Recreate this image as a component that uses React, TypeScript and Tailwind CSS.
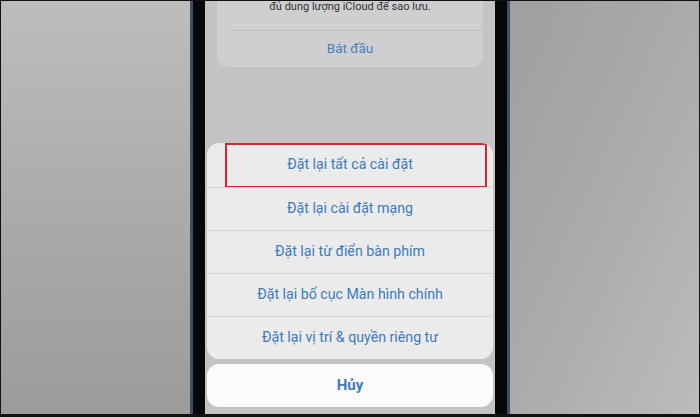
const rows = [
  "Đặt lại tất cả cài đặt",
  "Đặt lại cài đặt mạng",
  "Đặt lại từ điển bàn phím",
  "Đặt lại bố cục Màn hình chính",
  "Đặt lại vị trí & quyền riêng tư",
];

function Bezel() {
  return (
    <div className="flex h-full shrink-0">
      <div className="h-full w-[3px] bg-[#3d5063]" />
      <div className="h-full w-[12px] bg-[#070808]" />
    </div>
  );
}

export default function App() {
  return (
    <div
      className="flex h-[417px] w-[700px] overflow-hidden border border-b-[3px] border-[#111] bg-[#aaa]"
      style={{ fontFamily: 'Roboto, "Noto Sans", sans-serif' }}
    >
      <div className="h-full w-[189px] shrink-0 bg-gradient-to-b from-[#bdbdbd] via-[#ababab] to-[#9b9b9b]" />
      <Bezel />

      {/* phone screen */}
      <div className="flex h-full w-[290px] shrink-0 flex-col bg-[#c3c3c5]">
        <div className="mx-[12px] mt-[-22px] flex h-[88px] flex-col rounded-[10px] bg-[#cfcfd1]">
          <div className="flex h-[51px] items-end justify-center pb-[18px] text-[11px] leading-none text-[#333]">
            đủ dung lượng iCloud để sao lưu.
          </div>
          <div className="ml-[15px] h-px bg-[#bdbdc0]" />
          <div className="flex flex-1 items-center justify-center pb-[2px] text-[13.5px] text-[#4a80c0]">
            Bắt đầu
          </div>
        </div>

        <div className="mx-[2px] mt-[76px] flex flex-col overflow-hidden rounded-[12px] bg-[#ebebec]">
          {rows.map((r, i) => (
            <div
              key={r}
              className={`relative flex items-center justify-center text-[14.2px] text-[#3b7bbc] ${
                i === 0 ? "h-[44px]" : "h-[43px] border-t border-[#d6d6d8]"
              }`}
            >
              {r}
              {i === 0 && (
                <div className="absolute left-[18px] right-[6px] top-0 h-[45px] border-2 border-[#d8252d]" />
              )}
            </div>
          ))}
        </div>

        <div className="mx-[2px] mt-[5px] flex h-[43px] items-center justify-center rounded-[12px] bg-[#fbfbfb] text-[15px] font-bold text-[#3b7bbc]">
          Hủy
        </div>
      </div>

      <div className="flex h-full shrink-0 flex-row-reverse">
        <div className="h-full w-[3px] bg-[#3d5063]" />
        <div className="h-full w-[12px] bg-[#070808]" />
      </div>
      <div className="h-full flex-1 bg-gradient-to-br from-[#9f9f9f] via-[#ababab] to-[#bcbcbc]" />
    </div>
  );
}
